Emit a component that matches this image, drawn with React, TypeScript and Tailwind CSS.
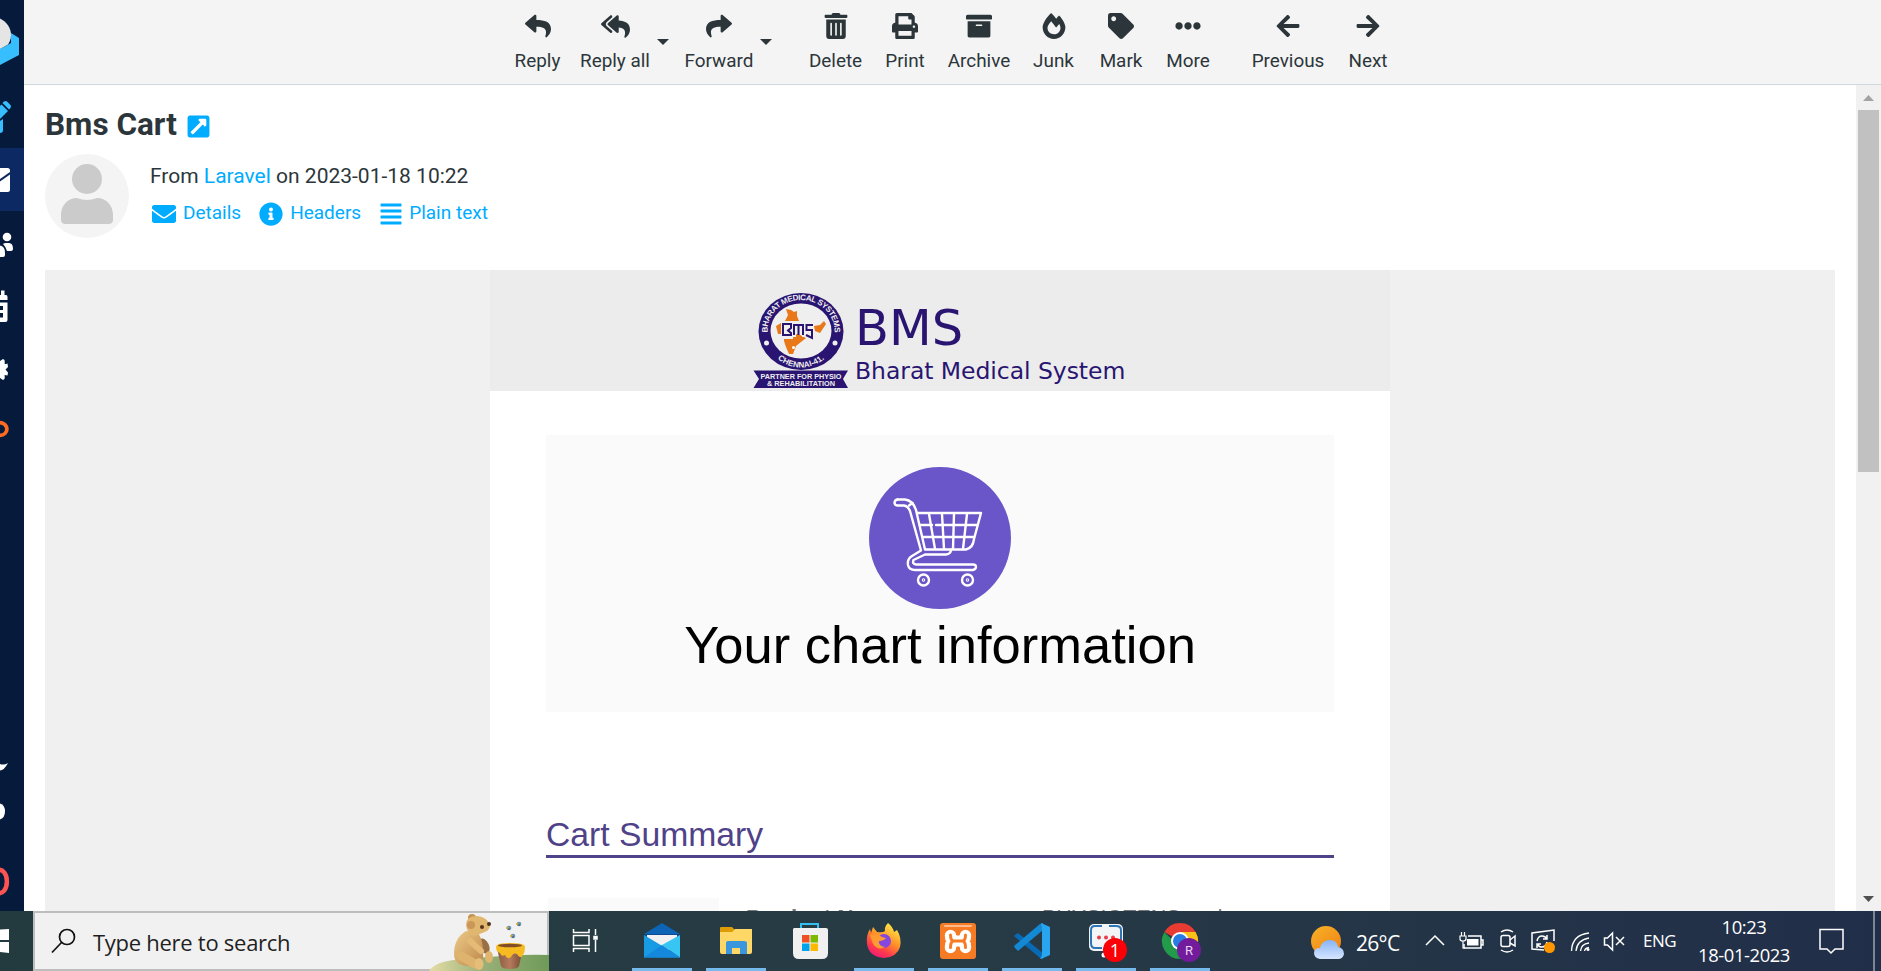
import type { ReactNode } from "react";
import {
  FaAlignJustify,
  FaArchive,
  FaArrowLeft,
  FaArrowRight,
  FaEllipsisH,
  FaEnvelope,
  FaFireAlt,
  FaInfoCircle,
  FaPrint,
  FaReply,
  FaReplyAll,
  FaShare,
  FaTag,
  FaTrashAlt,
  FaExternalLinkSquareAlt,
} from "react-icons/fa";

function NavItem({ className, children }: { className: string; children?: ReactNode }) {
  return (
    <div className={"w-6 shrink-0 overflow-hidden " + className}>
      <svg width="24" height="100%" fill="#fff">
        {children}
      </svg>
    </div>
  );
}

function Sidebar() {
  return (
    <nav className="flex w-6 shrink-0 flex-col bg-[#061a3c]">
      <NavItem className="h-[84px]">
        <path d="M11 33L19 38V55L0 65V49L11 43Z" fill="#37beff" />
        <path d="M0 18.5C7 22 11 28 11 35C11 40 9 43 8 44.5L0 49Z" fill="#e5e5e5" />
      </NavItem>
      <NavItem className="h-16">
        <g fill="#37beff">
          <path d="M2.5 19L4 17.5Q5.5 16.500 7 17.500L10.500 21Q11.500 22.500 10.500 24L9 25.500Z" />
          <path d="M1.500 20.500L8 27L0 35V22Z" />
          <path d="M0 37L3 35V46Q3 49 0 49Z" />
        </g>
      </NavItem>
      <NavItem className="h-[63px] bg-[#0d2963]">
        <path d="M0 20H7.500Q10 20 10 22.500V24L0 31Z" />
        <path d="M10 26.500V41.500Q10 44 7.500 44H0V33.500Z" />
      </NavItem>
      <NavItem className="h-[63px]">
        <circle cx="7" cy="26" r="4.300" />
        <path d="M3 33Q4 32 6 32H9Q13 32 13 38Q13 40 11 40H7Q6 36 3 33Z" />
        <path d="M0 34.500Q5 35 5 42V44Q5 46 3 46H0Z" />
      </NavItem>
      <NavItem className="h-[63px]">
        <path d="M0 21H1V16.500H4.500V21H6Q7.500 21 7.500 23V26H0Z" />
        <path fillRule="evenodd" d="M0 28.500H7.500V46Q7.500 48 5.500 48H0ZM0 32V36H3V32ZM0 39V43.500H3V39Z" />
      </NavItem>
      <NavItem className="h-[63px]">
        <path d="M0 24L3 22L4.500 23Q5 26 4.500 27Q6 27 7.500 26.500L8 30L5.500 32.500L8 35.500L7.500 38.500L4.500 38Q5 40 4.500 42L3 43L0 41Z" />
      </NavItem>
      <NavItem className="h-[63px]">
        <path d="M-1 22.500C9.500 22.500 9.500 35.500 -1 35.500" fill="none" stroke="#ff6b23" strokeWidth="3.800" />
      </NavItem>
      <NavItem className="h-[448px]">
        <path d="M0 301Q4 302.500 8 300Q4 307.500 0 307.500Z" />
        <path d="M0 340.500Q5 342 5 348.500Q5 354.500 0 356.500Z" />
        <path d="M-4 407.500C10.500 402 10.500 435 -4 429.500" fill="none" stroke="#ff5552" strokeWidth="4.500" />
      </NavItem>
    </nav>
  );
}

function Tool({ icon, label, width }: { icon: ReactNode; label: string; width: string }) {
  return (
    <button className={"flex shrink-0 flex-col items-center pt-[13px] " + width}>
      <span className="flex h-[26px] items-center text-[26px]">{icon}</span>
      <span className="mt-[9px] text-[18.900px] leading-[26px] whitespace-nowrap">{label}</span>
    </button>
  );
}

function Caret({ className = "" }: { className?: string }) {
  return (
    <svg width="12" height="6" className={"mt-[39px] shrink-0 " + className} fill="#2c363a">
      <path d="M0 0H12L6 6Z" />
    </svg>
  );
}

function Toolbar() {
  return (
    <div className="flex h-[85px] shrink-0 items-start border-b border-[#ced9de] bg-[#f4f4f4] pl-[481px] text-[#2c363a]">
      <Tool icon={<FaReply />} label="Reply" width="w-[65px]" />
      <Tool icon={<FaReplyAll className="size-[29px]" />} label="Reply all" width="ml-[3px] w-[84px]" />
      <Caret />
      <Tool icon={<FaShare />} label="Forward" width="ml-[9px] w-[82px]" />
      <Caret />
      <Tool icon={<FaTrashAlt />} label="Delete" width="ml-7 w-[71px]" />
      <Tool icon={<FaPrint />} label="Print" width="w-[68px]" />
      <Tool icon={<FaArchive />} label="Archive" width="w-20" />
      <Tool icon={<FaFireAlt />} label="Junk" width="w-[69px]" />
      <Tool icon={<FaTag />} label="Mark" width="w-[66px]" />
      <Tool icon={<FaEllipsisH />} label="More" width="w-[68px]" />
      <Tool icon={<FaArrowLeft />} label="Previous" width="ml-5 w-[92px]" />
      <Tool icon={<FaArrowRight />} label="Next" width="w-[68px]" />
    </div>
  );
}

function MessageHeader() {
  return (
    <header className="h-[185px] shrink-0 pl-[21px] text-[#2c363a]">
      <div className="flex h-[69px] items-center pt-[10px]">
        <h1 className="text-[31.500px] leading-10 font-bold">Bms Cart</h1>
        <FaExternalLinkSquareAlt className="mt-[3px] ml-[9px] size-[25px] text-[#00acff]" />
      </div>
      <div className="flex">
        <svg width="84" height="84" className="shrink-0">
          <circle cx="42" cy="42" r="42" fill="#f4f4f4" />
          <circle cx="42" cy="25" r="15" fill="#cbcbcb" />
          <path d="M32 44Q42 48 52 44C62 44 68 52 68 61V66Q68 70 63 70H21Q16 70 16 66V61C16 52 22 44 32 44Z" fill="#cbcbcb" />
        </svg>
        <div className="ml-[21px] pt-1">
          <div className="text-[21px] leading-9 whitespace-nowrap">
            From <span className="text-[#00acff]">Laravel</span> on 2023-01-18 10:22
          </div>
          <div className="mt-px flex h-9 items-center text-[19px] whitespace-nowrap text-[#00acff]">
            <FaEnvelope className="mt-0.5 ml-0.5 size-6" />
            <span className="ml-[7px]">Details</span>
            <FaInfoCircle className="mt-0.5 ml-[18px] size-6" />
            <span className="ml-[7px]">Headers</span>
            <FaAlignJustify className="mt-0.5 ml-[18px] size-6" />
            <span className="ml-[6px]">Plain text</span>
          </div>
        </div>
      </div>
    </header>
  );
}

function BmsEmblem() {
  return (
    <svg width="96" height="98" viewBox="753 291 96 98" className="shrink-0" fontFamily="Liberation Sans, sans-serif" fontWeight="700">
      <defs>
        <path id="ring-top" d="M768.500 338A33.500 30.500 0 1 1 833.500 338" />
        <path id="ring-bottom" d="M765 331A36 36.500 0 0 0 837 331" />
      </defs>
      <ellipse cx="801" cy="331.500" rx="42.500" ry="38.500" fill="#291571" />
      <ellipse cx="801" cy="331" rx="30.500" ry="27.500" fill="#efefef" />
      <g fill="#e87818">
        <path d="M786 309L791 310L794 312L797 311L797 316L799 321H785L788 315Z" />
        <path d="M776 326L781 323V334L778 334Z" />
        <path d="M814 326L820 325L824 321L826 324L820 333L815 331Z" />
        <path d="M784 336L798 334L806 338L796 346L793 354L789 354L786 347L784 341Z" />
      </g>
      <circle cx="793.500" cy="347.500" r="1.500" fill="#fff" />
      <path
        d="M783 324H791V328L788 330L791 332V337H783ZM794 337V325H804V337M799 325V334M812 325H806V331H812V335L807 337"
        fill="none"
        stroke="#efefef"
        strokeWidth="4"
      />
      <path
        d="M782 324H791V328L788 330.500L791 333V335H783V324M794 335V325H803V335M798.500 325V335M813 325H806.500V330H812V338L806 335"
        fill="none"
        stroke="#291571"
        strokeWidth="2"
      />
      <g fill="#efefef">
        <circle cx="766.500" cy="343" r="2.500" />
        <circle cx="835" cy="343" r="2.500" />
        <text fontSize="8">
          <textPath href="#ring-top" startOffset="50%" textAnchor="middle" textLength="104">
            BHARAT MEDICAL SYSTEMS
          </textPath>
        </text>
        <text fontSize="8">
          <textPath href="#ring-bottom" startOffset="50%" textAnchor="middle" textLength="51">
            CHENNAI-41.
          </textPath>
        </text>
      </g>
      <path d="M753.500 370.500H848L843 379L848 388H753.500L759 379Z" fill="#291571" />
      <g fill="#efefef" fontSize="7.600" textAnchor="middle">
        <text x="801" y="378.500" textLength="81" lengthAdjust="spacingAndGlyphs">
          PARTNER FOR PHYSIO
        </text>
        <text x="801" y="386" textLength="68" lengthAdjust="spacingAndGlyphs">
          &amp; REHABILITATION
        </text>
      </g>
    </svg>
  );
}

function CartIcon() {
  return (
    <svg width="142" height="142" viewBox="0 0 142 142" fill="none" stroke="#fff" strokeWidth="2.400" strokeLinecap="round" strokeLinejoin="round">
      <circle cx="71" cy="71" r="71" fill="#6a56c8" stroke="none" />
      <path d="M28.500 32.500H36Q44 33.500 47 43L56 82.500H97Q104 81 105 72L112 46H48" />
      <path d="M28.500 32.500Q25.500 33 25.500 36Q26 38.500 28.500 38.500H35Q39 39 41 44L52 83.500L43 89Q38 92 39 98Q40 103 46 103H104Q107 102 107 100Q107 97.500 104 97.500H47Q43 97 44.500 93L56 87.500H77Q82 87 82 82.500" />
      <path d="M40 38.500L43.500 36" />
      <path d="M51 58H63M67 58H108M54 70H105M60 47L66 82M73 47L75 82M85 47L84 82M98 47L94 82" />
      <circle cx="54.500" cy="113" r="5.500" />
      <circle cx="98.500" cy="113" r="5.500" />
      <circle cx="54.500" cy="113" r="0.500" />
      <circle cx="98.500" cy="113" r="0.500" />
    </svg>
  );
}

function Email() {
  return (
    <section className="ml-[21px] flex min-h-0 w-[1790px] flex-1 justify-center overflow-hidden bg-[#f0f0f0] font-['Liberation_Sans',Arial,sans-serif]">
      <div className="w-[900px] bg-white">
        <div className="flex h-[121px] items-start bg-[#ececec] pt-[21px] pl-[263px] font-['DejaVu_Sans',sans-serif] text-[#291571]">
          <BmsEmblem />
          <div className="ml-[6px] whitespace-nowrap">
            <div className="mt-2.5 text-[49.500px] leading-[54px]">BMS</div>
            <div className="text-[23.500px] leading-8 tracking-[-0.050px]">Bharat Medical System</div>
          </div>
        </div>
        <div className="mx-14 mt-[44px] flex h-[277px] flex-col items-center bg-[#fafafa] pt-8">
          <CartIcon />
          <div className="mt-1.5 text-[52.500px] leading-[60px] whitespace-nowrap text-black">Your chart information</div>
        </div>
        <h2 className="mx-14 mt-[100px] h-[46px] border-b-3 border-[#4f4288] text-[33.700px] leading-[44px] text-[#4f4288]">Cart Summary</h2>
        <div className="ml-[58px] flex pt-10 text-[21.500px] leading-[30px] text-[#777]">
          <div className="h-[60px] w-[171px] bg-[#fafafa]" />
          <div className="mt-[5px] ml-[27px] w-[296px] text-[22.500px] font-bold">Product Name</div>
          <div className="mt-[5px]">PHYSIOTENS and</div>
        </div>
      </div>
    </section>
  );
}

function Scrollbar() {
  return (
    <div className="flex w-[25px] shrink-0 flex-col items-center bg-[#f1f1f1]">
      <svg width="25" height="25" fill="#a3a3a3">
        <path d="M7 16H18L12.500 10Z" />
      </svg>
      <div className="h-[362px] w-[21px] bg-[#c1c1c1]" />
      <div className="flex-1" />
      <svg width="25" height="25" fill="#505050">
        <path d="M7 10H18L12.500 16Z" />
      </svg>
    </div>
  );
}

function BearScene() {
  return (
    <svg width="120" height="58" viewBox="429 913 120 58" className="shrink-0">
      <defs>
        <linearGradient id="hill">
          <stop offset="0" stopColor="#e5dda5" />
          <stop offset="0.450" stopColor="#99b079" />
          <stop offset="1" stopColor="#6f9a58" />
        </linearGradient>
        <linearGradient id="fur" x2="1" y2="1">
          <stop stopColor="#edcb89" />
          <stop offset="1" stopColor="#bd8749" />
        </linearGradient>
        <linearGradient id="pot">
          <stop stopColor="#8b5a42" />
          <stop offset="0.500" stopColor="#b57b5d" />
          <stop offset="1" stopColor="#724631" />
        </linearGradient>
      </defs>
      <path d="M429 971Q436 960 465 959Q510 954 549 955V971Z" fill="url(#hill)" />
      <ellipse cx="484" cy="946" rx="5" ry="8" fill="#987044" transform="rotate(-25 484 946)" />
      <path d="M466 931Q454 938 454 954Q454 966 469 966L483 959Q484 939 477 932Z" fill="url(#fur)" />
      <circle cx="472" cy="918" r="4" fill="#c4924f" />
      <path d="M466 925Q466 916 477 916Q486 917 489 923Q492 926 487 931L475 936Q467 934 466 925Z" fill="#e1b66f" />
      <circle cx="471" cy="925" r="4" fill="#c99858" />
      <circle cx="482" cy="927" r="2" fill="#583318" />
      <circle cx="489" cy="924" r="2" fill="#4a3020" />
      <path d="M470 941L481 951" stroke="#e5ba76" strokeWidth="6" strokeLinecap="round" />
      <path d="M461 956L475 964" stroke="#ddb36e" strokeWidth="9" strokeLinecap="round" />
      <ellipse cx="479" cy="964" rx="4.500" ry="6" fill="#e4bd79" />
      <ellipse cx="489" cy="957" rx="4" ry="6" fill="#e0b56e" />
      <path d="M497 948H523L519 966Q518 969 510 969Q502 969 501 966Z" fill="url(#pot)" />
      <path d="M496 947Q496 943 510 943Q525 943 525 947Q525 952 523 955Q520 960 517 954Q513 952 511 957Q507 960 505 955Q501 957 500 953Q496 952 496 947Z" fill="#f5bb21" />
      <ellipse cx="510" cy="945.500" rx="12" ry="1.800" fill="#814d25" />
      {[
        [509, 928],
        [519, 924],
        [513, 936],
      ].map(([x, y]) => (
        <g key={x}>
          <circle cx={x} cy={y} r="2.300" fill="#5f96bb" />
          <circle cx={x - 1.5} cy={y} r="1.300" fill="#d8a334" />
          <circle cx={x} cy={y + 1} r="0.800" fill="#3a4757" />
        </g>
      ))}
    </svg>
  );
}

function TaskIcon({ active = true, label, children }: { active?: boolean; label: string; children: ReactNode }) {
  return (
    <button aria-label={label} className="flex h-[60px] w-[74px] shrink-0 flex-col items-center justify-between pt-2.5">
      <svg width="46" height="44" viewBox="-5 -2 46 44">
        {children}
      </svg>
      {active && <span className="h-[3px] w-[60px] bg-[#76b9ed]" />}
    </button>
  );
}

function TaskApps() {
  return (
    <div className="flex">
      <TaskIcon label="Mail">
        <path d="M0 12L18 1L36 12V22H0Z" fill="#0a4b93" />
        <path d="M0 11L18 0L36 11Z" fill="#0d64b5" />
        <path d="M3 12H33V27H3Z" fill="#f1f1f3" />
        <path d="M0 12L20 24L36 34.500H0Z" fill="#179be2" />
        <path d="M36 12V34.500L18 22Z" fill="#37c5f3" />
        <path d="M0 34.500L18 22L36 34.500Z" fill="#1488dc" />
      </TaskIcon>
      <TaskIcon label="Files">
        <path d="M2 5Q2 4 3 4H14L17 7V14H2Z" fill="#dd9c04" />
        <path d="M2 9H14L17 6H34V29Q34 31 32 31H4Q2 31 2 29Z" fill="#ffd767" />
        <path d="M8 31V20Q8 18 10 18H26Q29 18 29 20V31H22V25H14V31Z" fill="#3b96dd" />
      </TaskIcon>
      <TaskIcon active={false} label="Store">
        <path d="M9 6V1H26V6" fill="none" stroke="#32bff2" strokeWidth="2" />
        <path d="M2 5H34Q36 5 36 7V30Q36 36 30 36H7Q1 36 1 30V6Z" fill="#f0f0f0" />
        <path d="M10 12H17.500V19.500H10Z" fill="#ef5025" />
        <path d="M18.500 12H26V19.500H18.500Z" fill="#7cba00" />
        <path d="M10 20.500H17.500V28H10Z" fill="#00a3ec" />
        <path d="M18.500 20.500H26V28H18.500Z" fill="#ffb900" />
      </TaskIcon>
      <TaskIcon label="Firefox">
        <defs>
          <linearGradient id="fox" x1="0.800" x2="0.250" y2="1">
            <stop stopColor="#fff14c" />
            <stop offset="0.450" stopColor="#ff9328" />
            <stop offset="0.750" stopColor="#ff3b4b" />
            <stop offset="1" stopColor="#ee177b" />
          </linearGradient>
        </defs>
        <path d="M22 0Q27 4 28 9L31 7Q36 15 34 24Q31 34 18 35Q3 34 1 21Q0 12 4 6L5 10L7 4L11 9Q17 10 19 8Q18 4 22 0Z" fill="url(#fox)" />
        <circle cx="18" cy="18" r="7" fill="#8547df" />
        <path d="M4 12Q12 10 16 14L20 15Q18 18 13 18Q12 23 19 24Q12 28 7 21Z" fill="#ff9a30" />
      </TaskIcon>
      <TaskIcon label="XAMPP">
        <rect width="36" height="36" rx="3" fill="#f57b25" />
        <rect x="4" y="2" width="28" height="2" rx="1" fill="#ffb98a" />
        <g fill="none" strokeLinecap="round" strokeLinejoin="round">
          <path d="M10.500 12.500Q10.500 18 15 18H21Q25.500 18 25.500 12.500M10.500 24.500Q10.500 18 15 18M25.500 24.500Q25.500 18 21 18" stroke="#fff" strokeWidth="11.500" />
          <path d="M10.500 12Q10.500 18 14 18H22Q25.500 18 25.500 12M10.500 24.500Q10.500 18 14 18M25.500 24.500Q25.500 18 22 18" stroke="#f57b25" strokeWidth="3" />
          <path d="M18 7V11M18 25V30" stroke="#f57b25" strokeWidth="3" />
        </g>
      </TaskIcon>
      <TaskIcon label="Code">
        <path d="M1 12L4 10L29 30V36L26 35L0 13Z" fill="#0869b4" />
        <path d="M1 25L4 28L29 7V0L26 1L0 23Z" fill="#1388d3" />
        <path d="M27 0L36 4V32L27 36L26 35Q28 34 28 31V4Z" fill="#29a5ef" />
      </TaskIcon>
      <TaskIcon label="Chat">
        <rect x="1" y="1" width="34" height="27" rx="5" fill="#f2f4f6" />
        <path d="M14 3H7Q3 3 3 7V20Q3 25 7 25H14M21 3H28Q33 3 33 7V18" fill="none" stroke="#2d75b6" strokeWidth="2" />
        <g fill="#e53e48">
          <circle cx="11" cy="14.500" r="2" />
          <circle cx="18" cy="14.500" r="2" />
          <circle cx="25" cy="14.500" r="2" />
        </g>
        <circle cx="16" cy="32" r="2.500" fill="#fff" />
        <circle cx="27" cy="27" r="12" fill="#fb0007" />
        <text x="27" y="33.500" textAnchor="middle" fill="#fff" fontSize="18" fontFamily="Open Sans, sans-serif">
          1
        </text>
      </TaskIcon>
      <TaskIcon label="Chrome">
        <path d="M18 18L2.400 9A18 18 0 0 1 33.600 9Z" fill="#e83b31" />
        <path d="M18 18V9H33.600A18 18 0 0 1 18 36Z" fill="#fbc117" />
        <path d="M2.400 9L18 36A18 18 0 0 1 2.400 9Z" fill="#229b4b" />
        <path d="M2.400 9L10 23L18 36Q27 35 30 28L18 25Z" fill="#229b4b" />
        <circle cx="18" cy="18" r="9" fill="#fff" />
        <circle cx="18" cy="18" r="7" fill="#287de5" />
        <circle cx="27" cy="27" r="12" fill="#731c9b" />
        <text x="27" y="32" textAnchor="middle" fill="#e7d3ef" fontSize="13" fontFamily="Roboto, sans-serif">
          R
        </text>
      </TaskIcon>
    </div>
  );
}

function Tray() {
  return (
    <svg width="202" height="60" viewBox="1425 911 202 60" className="ml-6 shrink-0" fill="none" stroke="#fff" strokeWidth="1.500">
      <path d="M1426 945L1435 936L1444 945" />
      <path d="M1468 936H1481V948H1464V944M1481 940H1483V945H1481" />
      <path d="M1467 939H1478.500V945.500H1467Z" fill="#fff" stroke="none" />
      <path d="M1460 936H1466V939Q1466 941 1463 941Q1460 941 1460 939ZM1461.500 936V932M1464.500 936V932M1463 941V948H1465" strokeWidth="1.200" />
      <rect x="1501" y="935.500" width="9" height="11" rx="2" />
      <path d="M1510 940L1515 936V946L1510 943M1501 932Q1507 928 1513 932M1501 950Q1507 954 1513 950" />
      <path d="M1544 950L1532 949V933L1554 930V941" />
      <path d="M1537 941Q1538 936 1542 936Q1545 936 1547 939M1547 935V939H1543M1547 942Q1546 947 1542 947Q1539 947 1537 944M1537 948V944H1541" />
      <circle cx="1549.500" cy="947.500" r="5.500" fill="#ff9800" stroke="none" />
      <path d="M1571.500 951Q1572 935 1589 933M1576 951Q1577 940 1589 938M1580.500 951Q1581 944 1589 943M1584.500 951Q1585 948 1589 947.500" strokeWidth="1.300" />
      <circle cx="1588" cy="949.500" r="1.500" fill="#fff" stroke="none" />
      <path d="M1604.500 938H1607.500L1612.500 933V950L1607.500 945H1604.500ZM1616 937L1624 945M1624 937L1616 945" />
    </svg>
  );
}

function Taskbar() {
  return (
    <footer className="flex h-[60px] w-[1881px] shrink-0 overflow-hidden bg-linear-to-r from-[#233b3e] via-[#273b45] to-[#212e49] font-['Open_Sans','Noto_Sans',sans-serif] text-white">
      <svg width="33" height="60" fill="#fff" className="shrink-0">
        <path d="M0 18.500L9 18V29H0ZM0 31H9V42L0 41Z" />
      </svg>
      <div className="flex h-[60px] w-[516px] shrink-0 items-center border-2 border-[#bdbdbd] bg-[#f1f1f1] text-[#1f1f1f]">
        <svg width="26" height="26" className="ml-4 shrink-0" fill="none" stroke="#111" strokeWidth="1.700">
          <circle cx="16" cy="9" r="7.500" />
          <path d="M10.500 14.500L1 24.500" />
        </svg>
        <span className="mt-0.5 ml-4 w-[320px] text-[22px] leading-8 tracking-[-0.270px] whitespace-nowrap">Type here to search</span>
        <div className="-mr-0.5 -mb-0.5 ml-4">
          <BearScene />
        </div>
      </div>
      <svg width="26" height="60" className="ml-[23px] shrink-0" fill="none" stroke="#fff" strokeWidth="1.500">
        <path d="M1.500 18V21.500H17V18M1.500 24.500H17V34.500H1.500ZM1.500 41V37.500H17V41M23.500 18V24M23.500 29V41" />
        <path d="M22 25.500H25V28H22Z" fill="#fff" />
      </svg>
      <div className="ml-[27px]">
        <TaskApps />
      </div>
      <svg width="36" height="36" viewBox="0 0 36 36" className="mt-[14px] ml-[94px] shrink-0">
        <defs>
          <linearGradient id="sun" x2="0.700" y2="1">
            <stop stopColor="#f6b329" />
            <stop offset="1" stopColor="#f28314" />
          </linearGradient>
          <linearGradient id="cloud" x2="0" y2="1">
            <stop stopColor="#87b4f7" />
            <stop offset="1" stopColor="#d6e5ff" />
          </linearGradient>
        </defs>
        <circle cx="15" cy="16" r="15" fill="url(#sun)" />
        <path d="M9 34Q3 33 3 28Q3 23 9 23Q11 15 19 15Q26 15 27 22Q33 23 33 29Q32 34 27 34Z" fill="url(#cloud)" />
      </svg>
      <span className="mt-[17px] ml-[9px] w-[45px] shrink-0 text-[21px] leading-[30px] tracking-[-0.700px] whitespace-nowrap">26°C</span>
      <Tray />
      <span className="mt-[17px] ml-4 w-[36px] shrink-0 text-[17px] leading-[26px] tracking-[-0.500px]">ENG</span>
      <div className="ml-[9px] flex w-28 shrink-0 flex-col items-center pt-0.5 text-[18.400px] leading-7 tracking-[-0.400px] whitespace-nowrap">
        <span>10:23</span>
        <span>18-01-2023</span>
      </div>
      <svg width="26" height="60" className="ml-[18px] shrink-0" fill="none" stroke="#fff" strokeWidth="1.500">
        <path d="M2 18.500H25V38H17L13 42L9 38H2Z" />
      </svg>
      <div className="ml-[29px] w-0.5 shrink-0 bg-[#7d8594]" />
    </footer>
  );
}

export default function App() {
  return (
    <div className="flex h-[971px] w-[1881px] flex-col overflow-hidden bg-white font-[Roboto,sans-serif]">
      <div className="flex h-[911px] shrink-0 overflow-hidden">
        <Sidebar />
        <main className="flex w-[1857px] flex-col">
          <Toolbar />
          <div className="flex min-h-0 flex-1">
            <div className="flex min-w-0 flex-1 flex-col">
              <MessageHeader />
              <Email />
            </div>
            <Scrollbar />
          </div>
        </main>
      </div>
      <Taskbar />
    </div>
  );
}
